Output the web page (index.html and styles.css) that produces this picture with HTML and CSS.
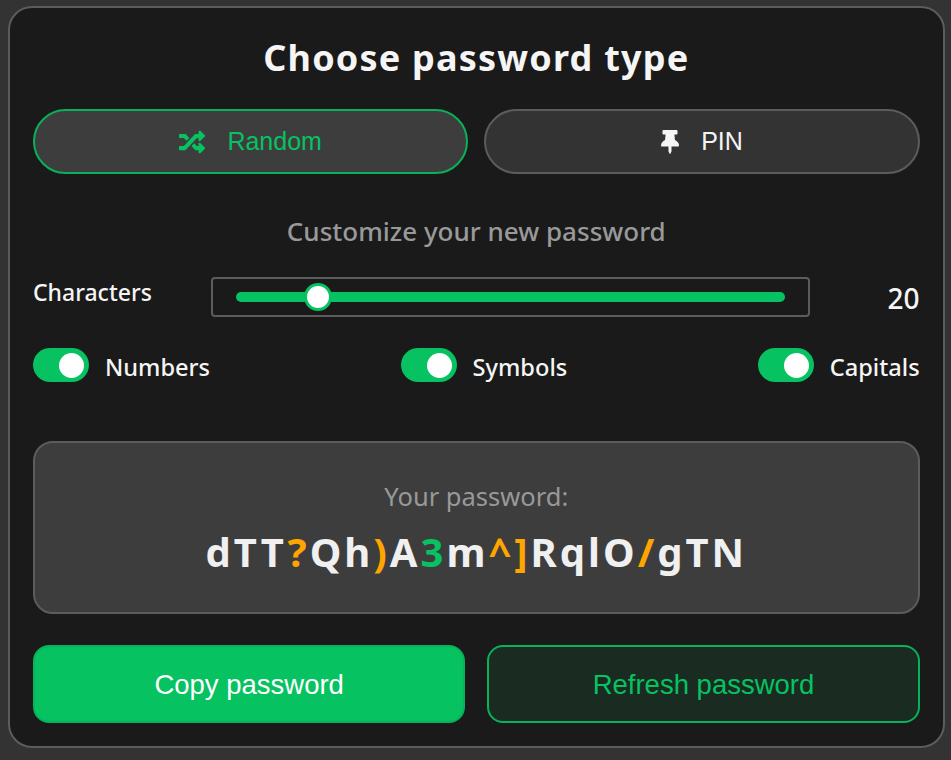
FILE: index.html
```html
<!DOCTYPE html>
<html lang="en">
<head>
    <meta charset="UTF-8">
    <meta name="viewport" content="width=device-width, initial-scale=1.0">
    <title>Password generator</title>
    <link rel="stylesheet" href="styles.css">
</head>
<body>
    <main class="card">
        <h1 class="title">Choose password type</h1>
        <div class="type-row">
            <button class="type-btn active">
                <svg class="icon-random" viewBox="0 0 512 512" fill="currentColor"><path d="M504.971 359.029c9.373 9.373 9.373 24.569 0 33.941l-80 79.984c-15.01 15.01-40.971 4.49-40.971-16.971V416h-58.785a12.004 12.004 0 0 1-8.773-3.812l-70.556-75.596 53.333-57.143L352 336h32v-39.981c0-21.438 25.943-31.998 40.971-16.971l80 79.981zM12 176h84l52.781 56.551 53.333-57.143-70.556-75.596A11.999 11.999 0 0 0 122.785 96H12c-6.627 0-12 5.373-12 12v56c0 6.627 5.373 12 12 12zm372 0v39.984c0 21.46 25.961 31.98 40.971 16.971l80-79.984c9.373-9.373 9.373-24.569 0-33.941l-80-79.981C409.943 24.021 384 34.582 384 56.019V96h-58.785a12.004 12.004 0 0 0-8.773 3.812L96 336H12c-6.627 0-12 5.373-12 12v56c0 6.627 5.373 12 12 12h110.785c3.326 0 6.503-1.381 8.773-3.812L352 176h32z"/></svg>
                Random
            </button>
            <button class="type-btn">
                <svg class="icon-pin" viewBox="0 0 384 512" fill="currentColor"><path d="M298.028 214.267L285.793 96H328c13.255 0 24-10.745 24-24V24c0-13.255-10.745-24-24-24H56C42.745 0 32 10.745 32 24v48c0 13.255 10.745 24 24 24h42.207L85.972 214.267C37.465 236.82 0 277.261 0 328c0 13.255 10.745 24 24 24h136v104.007c0 1.242.289 2.467.845 3.578l24 48c2.941 5.882 11.364 5.893 14.311 0l24-48a8.008 8.008 0 0 0 .845-3.578V352h136c13.255 0 24-10.745 24-24-.001-51.183-37.983-91.42-85.973-113.733z"/></svg>
                PIN
            </button>
        </div>

        <h2 class="subtitle">Customize your new password</h2>

        <div class="slider-row">
            <label class="slider-label" for="length">Characters</label>
            <div class="slider-box">
                <input id="length" class="slider" type="range" min="8" max="100" value="20">
            </div>
            <span class="slider-value">20</span>
        </div>

        <div class="option-row">
            <label class="option"><input type="checkbox" checked><span class="switch"></span><span class="option-text">Numbers</span></label>
            <label class="option"><input type="checkbox" checked><span class="switch"></span><span class="option-text">Symbols</span></label>
            <label class="option"><input type="checkbox" checked><span class="switch"></span><span class="option-text">Capitals</span></label>
        </div>

        <section class="result">
            <p class="result-label">Your password:</p>
            <p class="password">dTT<span class="sym">?</span>Qh<span class="sym">)</span>A<span class="num">3</span>m<span class="sym">^]</span>RqlO<span class="sym">/</span>gTN</p>
        </section>

        <div class="action-row">
            <button class="action-btn copy">Copy password</button>
            <button class="action-btn refresh">Refresh password</button>
        </div>
    </main>
</body>
</html>
```
FILE: styles.css
```css
* { box-sizing: border-box; }
body { margin: 0; padding: 6px 6px 12px 8px; background-color: #333; color: #f5f5f5; font-family: "Noto Sans", "Open Sans", sans-serif; }
.card { height: 742px; padding: 24px 23.4px 20px 23px; background-color: #1a1a1a; border: 2px solid #5c5c5c; border-radius: 24px; display: flex; flex-direction: column; }

.title { margin: 0; font-size: 36px; line-height: 52px; font-weight: 700; letter-spacing: 1.2px; text-align: center; }

.type-row { display: flex; gap: 16px; margin-top: 25px; }
.type-btn { flex: 1; height: 65px; display: flex; align-items: center; justify-content: center; gap: 22px; background-color: #333; border: 2px solid #5c5c5c; border-radius: 33px; color: #f5f5f5; font-family: "Liberation Sans", Arial, sans-serif; font-size: 25px; }
.type-btn.active { background-color: #3d3d3d; border-color: #08b25a; color: #06c261; }
.icon-random { width: 26px; height: 26px; }
.icon-pin { width: 18px; height: 24px; }

.subtitle { margin: 39px 0 0; font-size: 26px; line-height: 36px; font-weight: 500; color: #999; text-align: center; }

.slider-row { display: flex; align-items: flex-start; margin-top: 28px; }
.slider-label { width: 178px; font-size: 23px; line-height: 30px; font-weight: 500; }
.slider-box { width: 599px; height: 40px; padding: 0 23px; display: flex; align-items: center; border: 2px solid #5c5c5c; border-radius: 4px; }
.slider { width: 100%; height: 28px; margin: 0; background: none; appearance: none; -webkit-appearance: none; }
.slider::-webkit-slider-runnable-track { height: 10px; background-color: #06c261; border-radius: 5px; }
.slider::-webkit-slider-thumb { -webkit-appearance: none; width: 28px; height: 28px; margin-top: -9px; background-color: #fff; border: 3px solid #06c261; border-radius: 50%; }
.slider-value { margin-left: auto; font-size: 28px; line-height: 42px; font-weight: 500; }

.option-row { display: flex; justify-content: space-between; margin-top: 26px; }
.option { display: flex; align-items: center; gap: 16px; font-size: 23.6px; line-height: 36px; font-weight: 500; }
.option input { display: none; }
.option-text { padding-top: 4px; }
.switch { position: relative; width: 56px; height: 34px; background-color: #06c261; border-radius: 17px; }
.switch::after { content: ""; position: absolute; top: 5px; right: 5px; width: 25px; height: 25px; background-color: #fff; border-radius: 50%; }

.result { height: 173px; margin-top: 56px; padding-top: 33px; background-color: #3d3d3d; border: 2px solid #5c5c5c; border-radius: 20px; text-align: center; }
.result-label { margin: 0; font-size: 25.5px; line-height: 40px; color: #999; }
.password { margin: 9px 0 0; font-size: 40px; line-height: 54px; font-weight: 700; letter-spacing: 3px; color: #f0f0f0; }
.sym { color: #ffa500; }
.num { color: #06c261; }

.action-row { display: flex; gap: 22px; margin-top: 31px; }
.action-btn { flex: 1; height: 78px; padding-top: 3px; border-radius: 16px; font-family: "Liberation Sans", Arial, sans-serif; font-size: 27.5px; }
.copy { background-color: #06c261; border: 2px solid #06b35a; color: #fff; }
.refresh { background-color: #1a2b21; border: 2px solid #08b25a; color: #06c261; }
```
